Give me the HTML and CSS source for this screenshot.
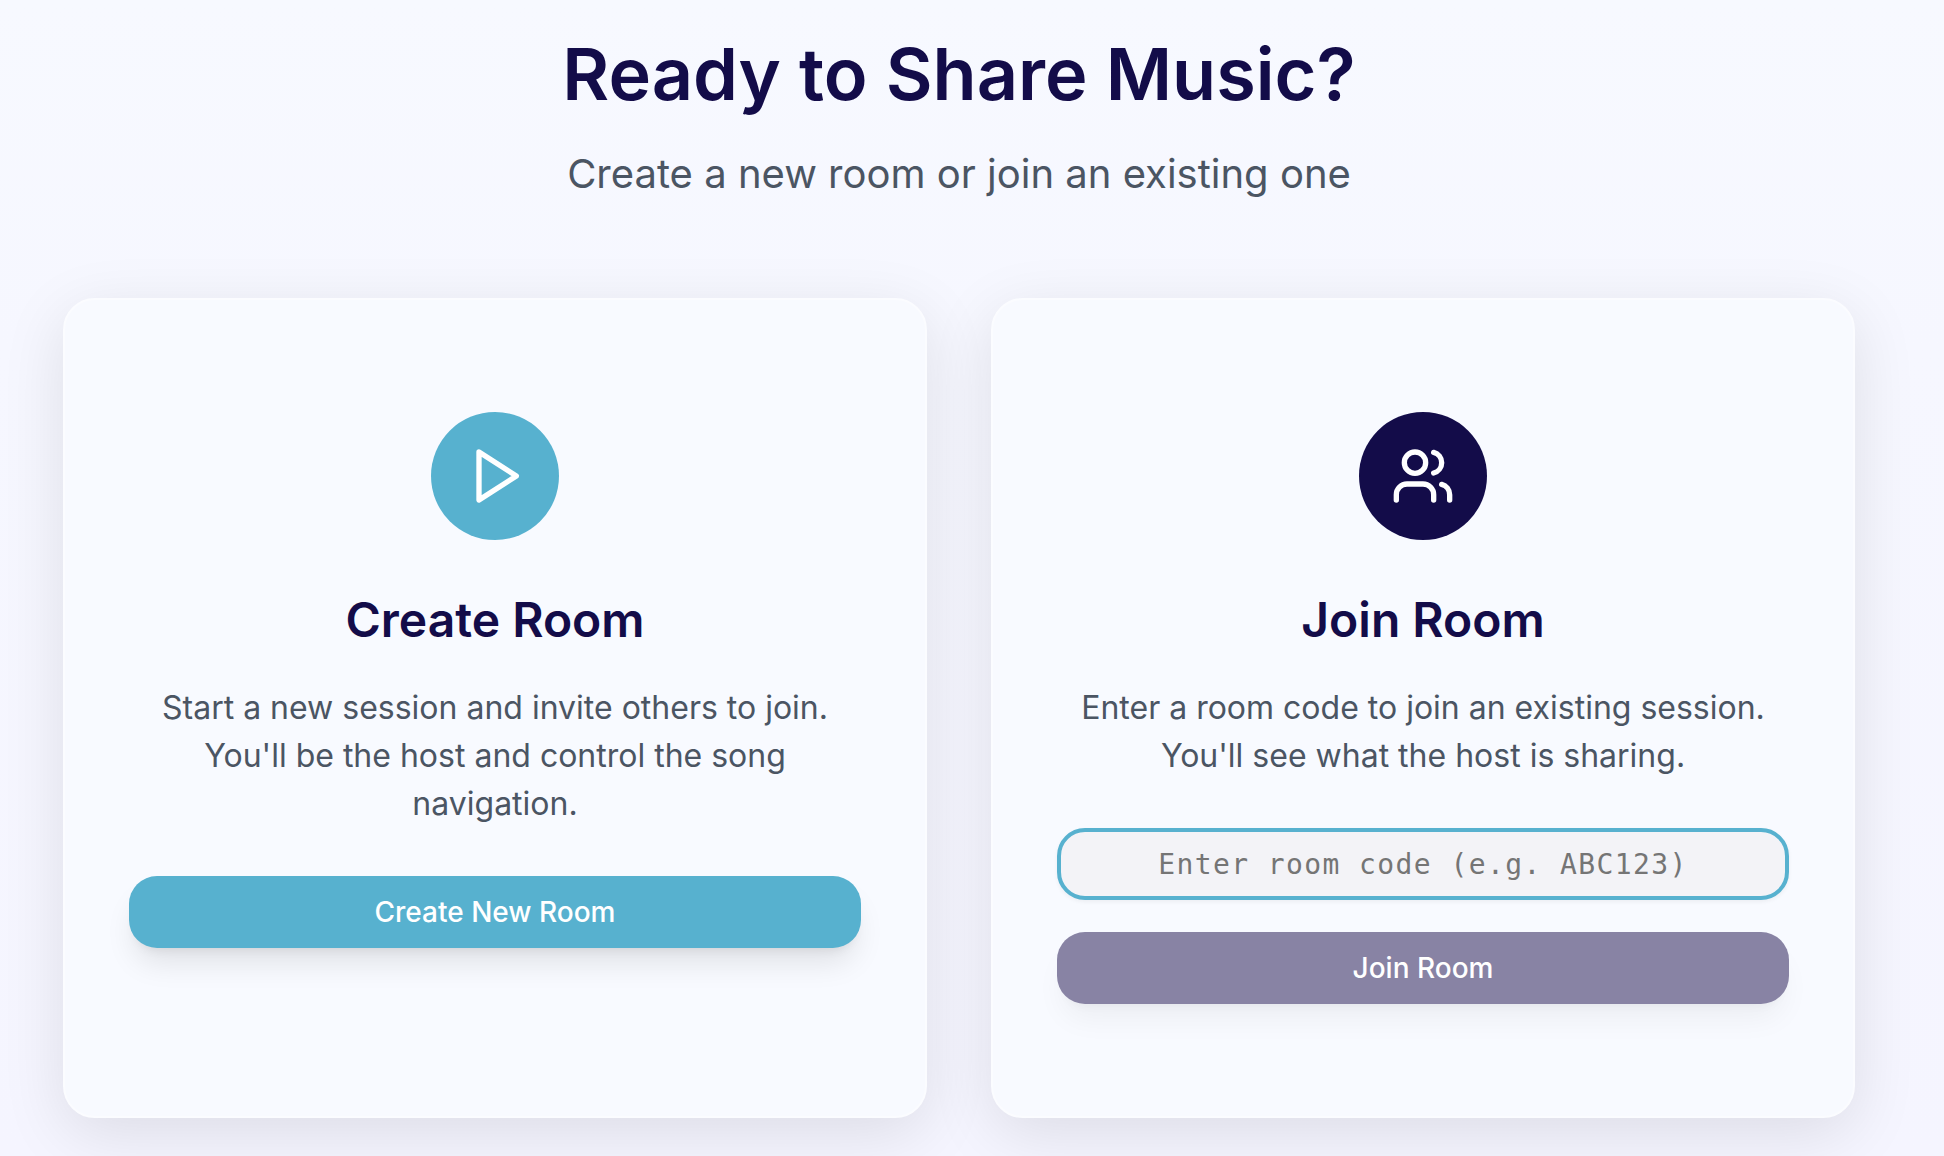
FILE: index.html
```html
<!DOCTYPE html>
<html lang="en">
<head>
<meta charset="utf-8">
<meta name="viewport" content="width=device-width, initial-scale=1">
<title>Ready to Share Music?</title>
<link rel="stylesheet" href="styles.css">
</head>
<body>
<main class="page">
  <header class="intro">
    <h1 class="intro-title">Ready to Share Music?</h1>
    <p class="intro-text">Create a new room or join an existing one</p>
  </header>
  <div class="cards">
    <section class="card">
      <div class="badge badge-create">
        <svg class="icon" viewBox="0 0 24 24" aria-hidden="true"><polygon points="6 3 20 12 6 21 6 3"/></svg>
      </div>
      <h2 class="card-title">Create Room</h2>
      <p class="card-text">Start a new session and invite others to join. You'll be the host and control the song navigation.</p>
      <button class="button button-create" type="button">Create New Room</button>
    </section>
    <section class="card">
      <div class="badge badge-join">
        <svg class="icon" viewBox="0 0 24 24" aria-hidden="true"><path d="M16 21v-2a4 4 0 0 0-4-4H6a4 4 0 0 0-4 4v2"/><circle cx="9" cy="7" r="4"/><path d="M22 21v-2a4 4 0 0 0-3-3.87"/><path d="M16 3.13a4 4 0 0 1 0 7.75"/></svg>
      </div>
      <h2 class="card-title">Join Room</h2>
      <p class="card-text">Enter a room code to join an existing session. You'll see what the host is sharing.</p>
      <form class="join-form">
        <input class="code-input" type="text" placeholder="Enter room code (e.g. ABC123)" aria-label="Room code">
        <button class="button button-join" type="submit" disabled>Join Room</button>
      </form>
    </section>
  </div>
</main>
</body>
</html>
```
FILE: styles.css
```css
* {
  box-sizing: border-box;
}

body {
  margin: 0;
  min-height: 100vh;
  background: linear-gradient(#f7f9ff, #f6f7ff 30%, #f5f5ff);
  color: #4b5563;
  font-family: Inter, "Liberation Sans", sans-serif;
}

h1,
h2,
p {
  margin: 0;
}

.page {
  padding: 34px 56px 38px 30px;
}

.intro {
  display: flex;
  flex-direction: column;
  gap: 32px;
  margin-bottom: 96px;
  text-align: center;
}

.intro-title {
  color: #130c49;
  font-size: 72px;
  font-weight: 600;
  line-height: 80px;
}

.intro-text {
  font-size: 40px;
  line-height: 56px;
}

.cards {
  display: grid;
  grid-template-columns: repeat(2, 1fr);
  gap: 64px;
  max-width: 1792px;
  margin: 0 auto;
}

.card {
  display: flex;
  flex-direction: column;
  align-items: center;
  padding: 112px 64px;
  border: 2px solid #fbfcff;
  border-radius: 32px;
  background: #f8faff;
  box-shadow: 0 16px 64px rgba(0, 0, 0, 0.1);
  text-align: center;
}

.badge {
  display: flex;
  align-items: center;
  justify-content: center;
  width: 128px;
  height: 128px;
  border-radius: 50%;
}

.badge-create {
  background: #57b1cf;
}

.badge-join {
  background: #130c49;
}

.icon {
  width: 64px;
  height: 64px;
  fill: none;
  stroke: #fff;
  stroke-width: 2;
  stroke-linecap: round;
  stroke-linejoin: round;
}

.card-title {
  margin: 48px 0 32px;
  color: #130c49;
  font-size: 48px;
  font-weight: 600;
  line-height: 64px;
}

.card-text {
  margin-bottom: 48px;
  font-size: 32px;
  line-height: 48px;
}

.join-form {
  display: flex;
  flex-direction: column;
  gap: 32px;
  width: 100%;
}

.button,
.code-input {
  width: 100%;
  height: 72px;
  border-radius: 28px;
  font-size: 28px;
}

.button {
  border: 0;
  color: #fff;
  font-family: inherit;
  font-weight: 500;
  box-shadow: 0 20px 30px -6px rgba(0, 0, 0, 0.1), 0 8px 12px -8px rgba(0, 0, 0, 0.1);
}

.button-create {
  background: #57b1cf;
}

.button-join {
  background: #8883a4;
  box-shadow: 0 20px 30px -6px rgba(0, 0, 0, 0.05), 0 8px 12px -8px rgba(0, 0, 0, 0.05);
}

.code-input {
  padding: 0 24px;
  border: 4px solid #57b1cf;
  background: #f3f3f7;
  box-shadow: 0 2px 4px rgba(0, 0, 0, 0.05);
  color: #130c49;
  font-family: "DejaVu Sans Mono", monospace;
  letter-spacing: 0.05em;
  text-align: center;
}

.code-input::placeholder {
  color: #757575;
}

@media (max-width: 1000px) {
  .cards {
    grid-template-columns: 1fr;
  }
}
```
